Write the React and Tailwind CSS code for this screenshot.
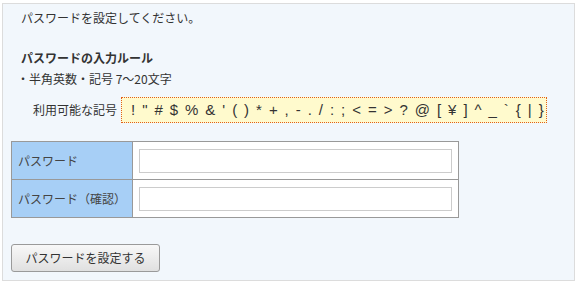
const SYMBOLS = `! " # $ % & ' ( ) * + , - . / : ; < = > ? @ [ ¥ ] ^ _ \` { | }`;

function Row({ label, last }) {
  return (
    <tr>
      <th
        className={`w-[121px] bg-[#a7cff6] border-r border-[#999] ${last ? "" : "border-b"} text-left font-normal pl-[6px] text-[12px] text-[#444]`}
      >
        {label}
      </th>
      <td className={`bg-white ${last ? "" : "border-b border-[#999]"} h-[38px] pl-[6px] pr-[6px]`}>
        <input
          type="password"
          className="block w-[313px] h-[24px] border border-[#ccc] bg-white outline-none"
        />
      </td>
    </tr>
  );
}

export default function App() {
  return (
    <div className="w-[579px] h-[286px] pt-[3px] pl-[2px] font-['Noto_Sans_CJK_JP',sans-serif] text-[#333]">
      <div className="w-[573px] h-[278px] border border-[#dcdcdc] bg-[#f2f7fc] pl-[8px]">
        <p className="text-[12px] leading-[16px] mt-[6px] pl-[10px]">パスワードを設定してください。</p>

        <p className="text-[12px] leading-[16px] font-bold mt-[24px] pl-[10px]">パスワードの入力ルール</p>
        <p className="text-[12px] leading-[16px] mt-[5px] pl-[6px]">・半角英数・記号 7～20文字</p>

        <div className="flex items-center mt-[10px] pl-[22px]">
          <span className="text-[12px] w-[88px]">利用可能な記号</span>
          <div className="h-[26px] w-[426px] border border-dotted border-[#e0601a] bg-[#fffacd] flex items-center pl-[9px] font-['Liberation_Sans',sans-serif] text-[15px] tracking-[1.4px] text-[#333] whitespace-pre">
            {SYMBOLS}
          </div>
        </div>

        <table className="mt-[18px] border border-[#999] border-collapse w-[448px]">
          <tbody>
            <Row label="パスワード" />
            <Row label="パスワード（確認）" last />
          </tbody>
        </table>

        <button className="mt-[26px] w-[149px] h-[28px] rounded-[3px] border border-[#9a9a9a] bg-gradient-to-b from-[#f8f8f8] to-[#e0e0e0] text-[12px] text-[#333]">
          パスワードを設定する
        </button>
      </div>
    </div>
  );
}
